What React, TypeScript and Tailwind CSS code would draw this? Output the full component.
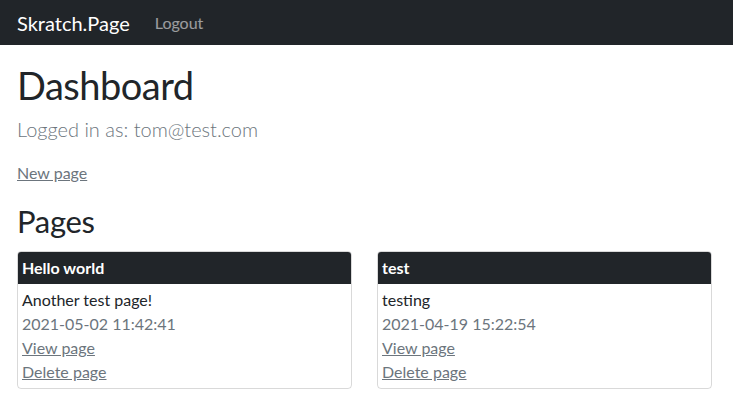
import React from "react";

const pages = [
  { title: "Hello world", body: "Another test page!", date: "2021-05-02 11:42:41" },
  { title: "test", body: "testing", date: "2021-04-19 15:22:54" },
];

export default function App() {
  return (
    <div className="min-h-screen bg-white text-[#212529] font-['Segoe_UI','Lato',sans-serif]">
      <nav className="flex h-[45px] items-center bg-[#212529] px-[17px]">
        <a href="#" className="text-[20px] leading-[30px] text-white">
          Skratch.Page
        </a>
        <a href="#" className="ml-[25px] text-[16px] text-white/55">
          Logout
        </a>
      </nav>

      <main className="px-[17px] pt-[16px]">
        <h1 className="mb-[5px] text-[38px] leading-[48px] tracking-[-0.5px] font-normal">Dashboard</h1>
        <p className="mb-[17px] text-[20px] leading-[30px] font-light text-[#6c757d]">
          Logged in as: tom@test.com
        </p>
        <p className="mb-[17px] text-[16px] leading-6">
          <a href="#" className="text-[#6c757d] underline">
            New page
          </a>
        </p>
        <h2 className="mb-[11px] text-[31px] leading-[38px] tracking-[-0.3px] font-normal">Pages</h2>

        <div className="grid grid-cols-2 gap-[25px] pr-[4px]">
          {pages.map((p) => (
            <div key={p.title} className="overflow-hidden rounded border border-black/15 text-[16px] leading-6">
              <div className="bg-[#212529] px-1 py-1 font-bold text-white">{p.title}</div>
              <div className="p-1">
                <div>{p.body}</div>
                <div className="text-[#6c757d]">{p.date}</div>
                <div>
                  <a href="#" className="text-[#6c757d] underline">View page</a>
                </div>
                <div>
                  <a href="#" className="text-[#6c757d] underline">Delete page</a>
                </div>
              </div>
            </div>
          ))}
        </div>
      </main>
    </div>
  );
}
